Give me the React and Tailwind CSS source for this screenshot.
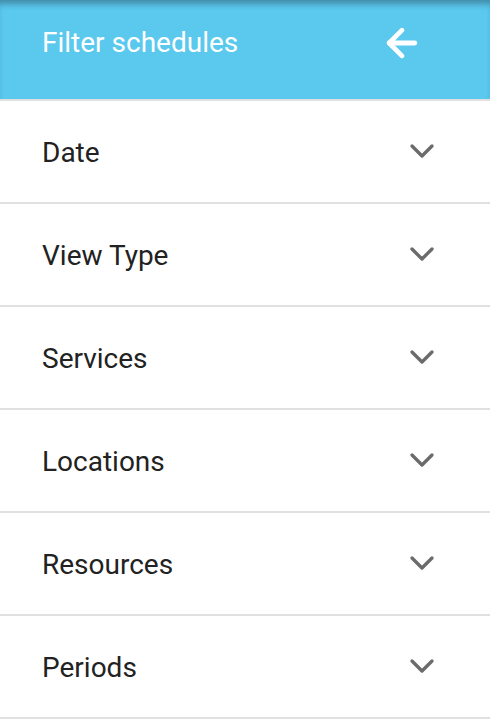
import { ArrowLeft, ChevronDown } from 'lucide-react'

const sections = ['Date', 'View Type', 'Services', 'Locations', 'Resources', 'Periods']

export default function App() {
    return (
        <div className="w-[490px] h-[720px] overflow-hidden bg-white font-['Roboto',sans-serif]">
            {/* Header */}
            <div className="h-[101px] bg-[#5bc8ee] border-b-2 border-[#e0e0e0] shadow-[inset_0_7px_6px_-3px_rgba(0,0,0,0.3)] flex items-center justify-between pl-[42px] pr-[66px] pb-[14px]">
                <h1 className="text-[28px] text-white leading-none">Filter schedules</h1>
                <ArrowLeft className="w-[44px] h-[44px] text-white" strokeWidth={2.6} />
            </div>

            {/* Sections */}
            {sections.map(name => (
                <div
                    key={name}
                    className="h-[103px] border-b-2 border-[#e0e0e0] flex items-center justify-between pl-[42px] pr-[48px] pt-[2px]"
                >
                    <span className="text-[28px] text-[#222] leading-none">{name}</span>
                    <ChevronDown className="w-[40px] h-[40px] text-[#6b6b6b] -mt-[4px]" strokeWidth={2} />
                </div>
            ))}
        </div>
    )
}
